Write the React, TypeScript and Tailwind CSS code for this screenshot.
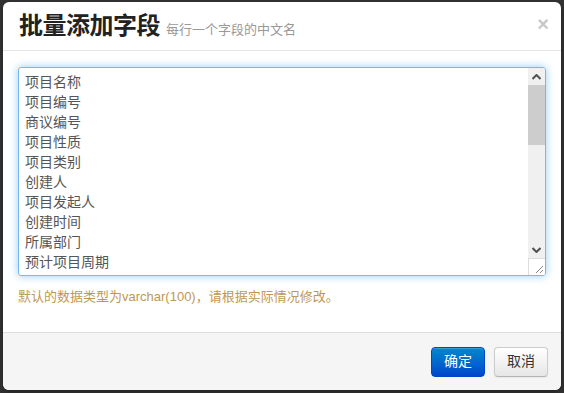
import React from 'react';

const FIELDS = [
  '项目名称',
  '项目编号',
  '商议编号',
  '项目性质',
  '项目类别',
  '创建人',
  '项目发起人',
  '创建时间',
  '所属部门',
  '预计项目周期',
  '预计项目开始时间',
];

export default function App() {
  return (
    <div className="w-[564px] h-[393px] bg-[#333] pt-[2px] pl-[3px] font-['Liberation_Sans','Noto_Sans_CJK_SC',sans-serif]">
      <div className="w-[558px] h-[388px] bg-white rounded-[6px] overflow-hidden flex flex-col shadow-[0_3px_7px_rgba(0,0,0,0.3)]">
        {/* Header */}
        <div className="h-[49px] shrink-0 border-b border-[#e5e5e5] pl-[16px] pr-[12px] flex items-center">
          <h3 className="flex-1 text-[24px] leading-[30px] font-bold text-[#222] font-['Noto_Sans_CJK_SC',sans-serif] tracking-[-0.5px]">
            批量添加字段
            <span className="ml-[6px] text-[13px] font-normal text-[#999] tracking-normal">每行一个字段的中文名</span>
          </h3>
          <button type="button" className="text-[20px] leading-[20px] font-bold text-[#c8c8c8] -mt-[4px]">×</button>
        </div>

        {/* Body */}
        <div className="flex-1 px-[15px] pt-[16px]">
          <div className="relative h-[209px] border border-[rgba(82,168,236,0.8)] rounded-[3px] shadow-[0_0_8px_rgba(82,168,236,0.6)] overflow-hidden flex">
            <div className="flex-1 pl-[6px] pt-[4px] text-[14px] leading-[20px] text-[#555] overflow-hidden">
              {FIELDS.map((f) => (
                <div key={f}>{f}</div>
              ))}
            </div>
            {/* Scrollbar */}
            <div className="w-[17px] bg-[#f0f0f0] flex flex-col">
              <div className="h-[17px] flex items-center justify-center">
                <ChevronUp />
              </div>
              <div className="h-[60px] bg-[#cdcdcd]" />
              <div className="flex-1" />
              <div className="h-[17px] flex items-center justify-center">
                <ChevronDown />
              </div>
              <div className="h-[17px] bg-white border-l border-t border-[#dcdcdc] flex items-end justify-end">
                <Resizer />
              </div>
            </div>
          </div>
          <p className="mt-[12px] text-[13px] leading-[18px] text-[#c09853]">默认的数据类型为varchar(100)，请根据实际情况修改。</p>
        </div>

        {/* Footer */}
        <div className="h-[58px] shrink-0 border-t border-[#ddd] bg-[#f5f5f5] flex items-center justify-end gap-[9px] pr-[13px]">
          <button type="button" className="w-[54px] h-[30px] rounded-[4px] border border-[#0044cc] bg-gradient-to-b from-[#0088cc] to-[#0044cc] text-white text-[14px] shadow-[inset_0_1px_0_rgba(255,255,255,0.2)]">
            确定
          </button>
          <button type="button" className="w-[54px] h-[30px] rounded-[4px] border border-[#ccc] border-b-[#b3b3b3] bg-gradient-to-b from-white to-[#e6e6e6] text-[#333] text-[14px] shadow-[0_1px_2px_rgba(0,0,0,0.05)]">
            取消
          </button>
        </div>
      </div>
    </div>
  );
}

const ChevronUp = () => (
  <svg width="9" height="6" viewBox="0 0 9 6"><path d="M0.5 5 4.5 1 8.5 5" fill="none" stroke="#505050" strokeWidth="2" /></svg>
);
const ChevronDown = () => (
  <svg width="9" height="6" viewBox="0 0 9 6"><path d="M0.5 1 4.5 5 8.5 1" fill="none" stroke="#505050" strokeWidth="2" /></svg>
);
const Resizer = () => (
  <svg width="10" height="10" viewBox="0 0 10 10" className="mb-[1px] mr-[1px]">
    <path d="M9 2 2 9M9 6 6 9" stroke="#888" strokeWidth="1" />
  </svg>
);
